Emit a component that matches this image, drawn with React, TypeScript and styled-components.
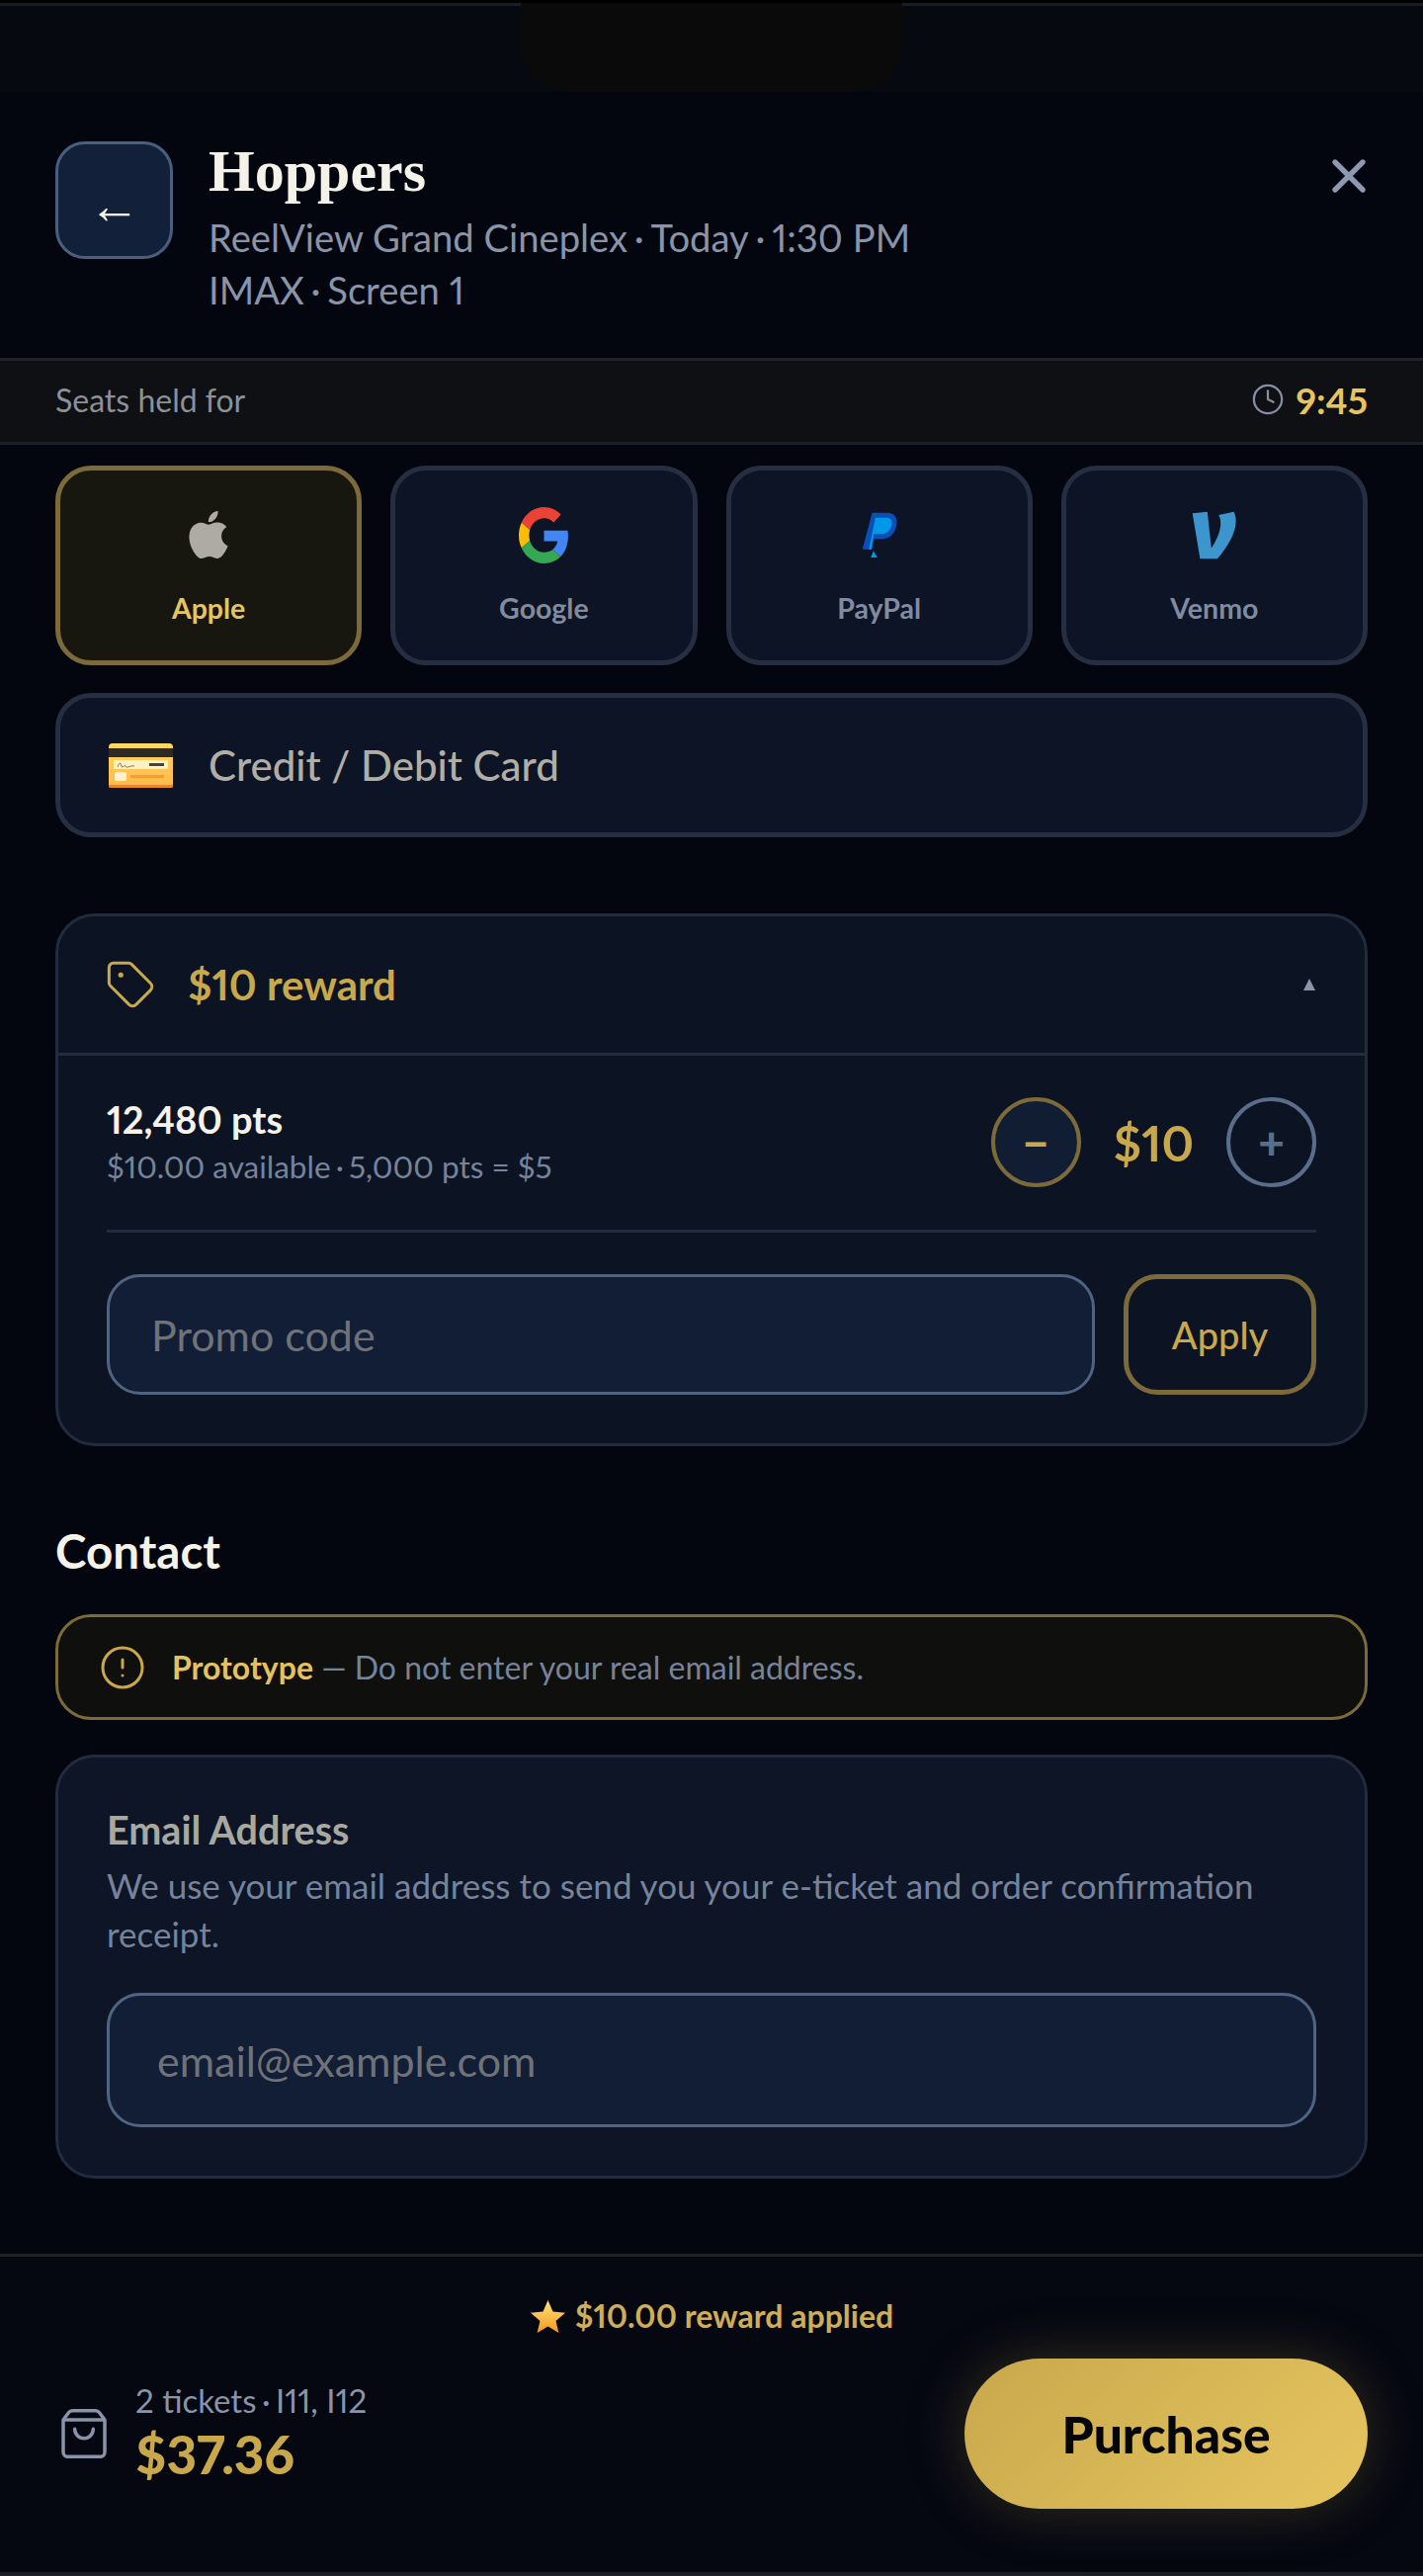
import React from 'react';
import styled, { createGlobalStyle } from 'styled-components';
import { X, Clock, Tag, CircleAlert, ShoppingBag } from 'lucide-react';
import { SiApple } from 'react-icons/si';

const GlobalStyle = createGlobalStyle`
  * { box-sizing: border-box; }
  html, body { margin: 0; padding: 0; background: #03060f; }
  body {
    font-family: "Lato", "Noto Sans", sans-serif;
    font-variant-numeric: proportional-nums;
    color: #f5f2ea;
  }
  button, input { font-family: inherit; font-variant-numeric: inherit; }
`;

const gold = '#c9a84c';
const goldLight = '#e6c560';
const goldBorder = '#7c6a3a';
const line = '#222c3e';
const muted = '#76839a';

const Page = styled.div`
  width: 1440px;
  height: 2606px;
  display: flex;
  flex-direction: column;
  background: #03060f;
`;

const StatusBar = styled.div`
  height: 93px;
  display: flex;
  justify-content: center;
  background: #060a10;
  border-top: 3px solid #000;
  position: relative;

  &::before {
    content: '';
    position: absolute;
    top: 0;
    left: 0;
    right: 0;
    height: 3px;
    background: #1a1d22;
  }
`;

const Notch = styled.div`
  width: 386px;
  height: 90px;
  background: #0a0a0a;
  border-radius: 0 0 52px 52px;
  position: relative;
`;

const Header = styled.header`
  height: 269px;
  padding: 50px 56px 0;
  display: flex;
  align-items: flex-start;
  gap: 36px;
`;

const BackButton = styled.button`
  width: 119px;
  height: 119px;
  flex: none;
  display: flex;
  align-items: center;
  justify-content: center;
  padding: 10px 0 0;
  background: #12203a;
  border: 3px solid #4a5f7e;
  border-radius: 30px;
  font-family: "Liberation Sans", sans-serif;
  font-size: 52px;
  line-height: 52px;
  color: #f5f2ea;
`;

const HeaderText = styled.div`
  flex: 1;
`;

const Title = styled.h1`
  margin: -2px 0 9px;
  font-family: "Liberation Serif", serif;
  font-size: 60px;
  line-height: 64px;
  font-weight: 700;
  color: #f5f2ea;
`;

const Meta = styled.div`
  font-size: 38.2px;
  line-height: 53px;
  color: #8a94a9;
`;

const Sep = styled.span`
  word-spacing: -3px;
`;

const CloseButton = styled.button`
  flex: none;
  width: 60px;
  height: 60px;
  margin: 5px -11px 0 0;
  padding: 0;
  display: flex;
  align-items: center;
  justify-content: center;
  background: none;
  border: none;
  color: #8e99b0;
`;

const TimerBar = styled.div`
  height: 88px;
  padding: 0 56px 4px;
  display: flex;
  align-items: center;
  justify-content: space-between;
  background: #0e1013;
  border-top: 3px solid #1f2227;
  border-bottom: 3px solid #1c2029;
`;

const TimerLabel = styled.span`
  font-size: 32px;
  color: #8c9097;
`;

const TimerValue = styled.div`
  display: flex;
  align-items: center;
  gap: 11px;
  font-size: 37px;
  font-weight: 700;
  color: ${goldLight};

  svg { color: #858fa3; }
`;

const Content = styled.main`
  flex: 1;
  padding: 21px 56px 0;
  display: flex;
  flex-direction: column;
`;

const PayGrid = styled.div`
  display: grid;
  grid-template-columns: repeat(4, 1fr);
  gap: 29px;
`;

const PayButton = styled.button<{ $active?: boolean }>`
  height: 202px;
  padding: 36px 0 0;
  display: flex;
  flex-direction: column;
  align-items: center;
  background: ${p => (p.$active ? '#17160f' : '#0c1425')};
  border: 5px solid ${p => (p.$active ? goldBorder : '#262f42')};
  border-radius: 36px;
`;

const PayIcon = styled.span`
  height: 58px;
  display: flex;
  align-items: center;
  justify-content: center;
  color: #adaba3;
`;

const PayLabel = styled.span<{ $active?: boolean }>`
  margin-top: 27px;
  font-size: 28.5px;
  line-height: 36px;
  font-weight: 700;
  color: ${p => (p.$active ? goldLight : '#818b9f')};
`;

const CardRow = styled.button`
  height: 146px;
  margin-top: 28px;
  padding: 0 0 0 49px;
  display: flex;
  align-items: center;
  gap: 36px;
  background: #0c1425;
  border: 5px solid #262f42;
  border-radius: 36px;
  font-size: 42px;
  font-weight: 500;
  color: #b0aea6;
`;

const Panel = styled.section`
  margin-top: 77px;
  background: #0c1424;
  border: 3px solid ${line};
  border-radius: 40px;
`;

const PanelHead = styled.div`
  height: 141px;
  padding: 0 50px 0 47px;
  display: flex;
  align-items: center;
  gap: 32px;
  border-bottom: 3px solid ${line};
  font-size: 42px;
  font-weight: 700;
  color: ${gold};
`;

const Caret = styled.span`
  margin-left: auto;
  width: 0;
  height: 0;
  border-left: 6px solid transparent;
  border-right: 6px solid transparent;
  border-bottom: 12px solid #8c95a8;
`;

const PanelBody = styled.div`
  padding: 42px 49px 49px;
`;

const PointsRow = styled.div`
  display: flex;
  align-items: center;
  justify-content: space-between;
  padding-bottom: 43px;
  border-bottom: 3px solid ${line};
`;

const Points = styled.div`
  margin-top: -2px;
  font-size: 38px;
  line-height: 46px;
  font-weight: 700;
  color: #f5f2ea;
`;

const PointsSub = styled.div`
  margin-top: 5px;
  font-size: 31.5px;
  line-height: 40px;
  color: ${muted};
`;

const Stepper = styled.div`
  display: flex;
  align-items: center;
  gap: 33px;
  font-size: 49px;
  font-weight: 700;
  color: ${gold};
`;

const StepButton = styled.button<{ $gold?: boolean }>`
  width: 91px;
  height: 91px;
  padding: 0;
  display: flex;
  align-items: center;
  justify-content: center;
  background: ${p => (p.$gold ? '#111d33' : 'transparent')};
  border: 4px solid ${p => (p.$gold ? goldBorder : '#5a6e8c')};
  border-radius: 50%;
  font-size: 46px;
  font-weight: 900;
  color: ${p => (p.$gold ? gold : '#5a6e8c')};
`;

const PromoRow = styled.div`
  margin-top: 42px;
  display: flex;
  gap: 29px;
`;

const TextField = styled.input<{ $height: number; $inset: number }>`
  flex: 1;
  min-width: 0;
  height: ${p => p.$height}px;
  padding: 0 ${p => p.$inset}px;
  background: #121e35;
  border: 3px solid #506482;
  border-radius: 34px;
  font-size: 43px;
  color: #f5f2ea;
  outline: none;

  &::placeholder {
    color: #6f7278;
    opacity: 1;
  }
`;

const ApplyButton = styled.button`
  width: 195px;
  flex: none;
  background: transparent;
  border: 5px solid ${goldBorder};
  border-radius: 34px;
  font-size: 38px;
  font-weight: 500;
  color: ${gold};
`;

const Heading = styled.h2`
  margin: 77px 0 0;
  font-size: 47.5px;
  line-height: 58px;
  font-weight: 700;
  color: #f5f2ea;
`;

const Notice = styled.div`
  height: 107px;
  margin-top: 35px;
  padding: 0 41px;
  display: flex;
  align-items: center;
  gap: 26px;
  background: #0f0f0d;
  border: 3px solid ${goldBorder};
  border-radius: 36px;
  font-size: 32px;
  color: ${muted};

  svg { color: ${gold}; flex: none; }
  strong { font-weight: 700; color: #e3c25f; }
`;

const EmailCard = styled.section`
  margin-top: 35px;
  padding: 51px 49px 49px;
  background: #0d1526;
  border: 3px solid ${line};
  border-radius: 40px;
`;

const FieldLabel = styled.div`
  font-size: 39.5px;
  line-height: 44px;
  font-weight: 700;
  color: #a8a8a0;
`;

const FieldHint = styled.p`
  margin: 10px 0 35px;
  font-size: 35px;
  line-height: 49px;
  color: ${muted};
`;

const EmailField = styled.div`
  display: flex;
`;

const Footer = styled.footer`
  height: 326px;
  display: flex;
  flex-direction: column;
  background: #050711;
  border-top: 3px solid #1f2329;
  border-bottom: 4px solid #1b1e24;
  padding: 41px 56px 0 57px;
`;

const RewardLine = styled.div`
  display: flex;
  align-items: center;
  justify-content: center;
  gap: 10px;
  font-size: 32px;
  line-height: 38px;
  font-weight: 700;
  color: #cfae58;
`;

const CheckoutRow = styled.div`
  margin-top: 24px;
  display: flex;
  align-items: center;
  justify-content: space-between;
`;

const Summary = styled.div`
  display: flex;
  align-items: center;
  gap: 24px;

  svg { color: #8a93a8; }
`;

const SummaryLine = styled.div`
  margin-top: -3px;
  font-size: 33px;
  line-height: 42px;
  color: #8a93a8;
`;

const Total = styled.div`
  margin-top: 3px;
  font-size: 53px;
  line-height: 62px;
  font-weight: 900;
  color: ${gold};
`;

const PurchaseButton = styled.button`
  width: 408px;
  height: 152px;
  background: linear-gradient(135deg, #c9a84c, #e6c560);
  border: none;
  border-radius: 76px;
  box-shadow: 0 0 60px rgba(201, 168, 76, 0.25);
  font-size: 51.5px;
  font-weight: 900;
  color: #05060a;
`;

const GoogleMark = () => (
  <svg width="51" height="57" viewBox="0 0 48 48" preserveAspectRatio="none">
    <path fill="#EA4335" d="M24 9.5c3.54 0 6.71 1.22 9.21 3.6l6.85-6.85C35.9 2.38 30.47 0 24 0 14.62 0 6.51 5.38 2.56 13.22l7.98 6.19C12.43 13.72 17.74 9.5 24 9.5z" />
    <path fill="#4285F4" d="M46.98 24.55c0-1.57-.15-3.09-.38-4.55H24v9.02h12.94c-.58 2.96-2.26 5.48-4.78 7.18l7.73 6c4.51-4.18 7.09-10.36 7.09-17.65z" />
    <path fill="#FBBC05" d="M10.53 28.59c-.48-1.45-.76-2.99-.76-4.59s.27-3.14.76-4.59l-7.98-6.19C.92 16.46 0 20.12 0 24c0 3.88.92 7.54 2.56 10.78l7.97-6.19z" />
    <path fill="#34A853" d="M24 48c6.48 0 11.93-2.13 15.89-5.81l-7.73-6c-2.15 1.45-4.92 2.3-8.16 2.3-6.26 0-11.57-4.22-13.47-9.91l-7.98 6.19C6.51 42.62 14.62 48 24 48z" />
  </svg>
);

const PayPalMark = () => (
  <svg width="38" height="48" viewBox="95 80 115 145">
    <path fill="#0a4fb5" d="M130 85h45c22 0 34 14 30 36-4 26-20 44-42 44h-28l-5 32h-30z" />
    <path fill="#0098e8" d="M140 100h35c12 0 17 9 15 21-3 17-14 29-28 29h-27l-8 48h-5l-2-2z" />
    <path fill="#0098e8" d="M134 202l12 20h-20z" />
  </svg>
);

const VenmoMark = () => (
  <svg width="47" height="51" viewBox="80 85 140 152">
    <path fill="#3d95ce" d="M85 95l45-5 12 110c12-18 28-48 28-74 0-12-2-20-6-26l46-10c4 8 6 18 6 30 0 34-26 78-56 112h-52z" />
  </svg>
);

const CardMark = () => (
  <svg width="65" height="45" viewBox="0 0 65 45">
    <defs>
      <linearGradient id="cardFill" x1="0" y1="0" x2="0" y2="1">
        <stop offset="0" stopColor="#ffd766" />
        <stop offset="1" stopColor="#ffb84a" />
      </linearGradient>
    </defs>
    <rect width="65" height="45" rx="4" fill="url(#cardFill)" />
    <rect y="42" width="65" height="3" rx="1.5" fill="#e8862c" />
    <rect y="5" width="65" height="9" fill="#2b2a24" />
    <rect x="5" y="17" width="55" height="9" rx="1" fill="#fff1c4" />
    <path d="M9 24c2-5 3-5 4-1s3-3 4 0 5-1 9 0" fill="none" stroke="#5b5443" strokeWidth="0.8" />
    <rect x="41" y="20" width="15" height="3" fill="#4b4432" />
    <rect x="6" y="29" width="12" height="9" rx="2" fill="#fff0cf" />
    <rect x="22" y="32" width="34" height="3" fill="#f0a032" />
  </svg>
);

const StarMark = () => (
  <svg width="35" height="33" viewBox="0 0 35 33">
    <defs>
      <linearGradient id="starFill" x1="0" y1="0" x2="0" y2="1">
        <stop offset="0" stopColor="#ffe27a" />
        <stop offset="1" stopColor="#f59a1e" />
      </linearGradient>
    </defs>
    <path fill="url(#starFill)" d="M17.5 0l5 11.6 12.5 1.2-9.5 8.2 2.9 12-10.9-6.4L6.6 33l2.9-12L0 12.8l12.5-1.2z" />
  </svg>
);

export default function App() {
  return (
    <>
      <GlobalStyle />
      <Page>
        <StatusBar>
          <Notch />
        </StatusBar>

        <Header>
          <BackButton aria-label="Back">←</BackButton>
          <HeaderText>
            <Title>Hoppers</Title>
            <Meta>ReelView Grand Cineplex<Sep> · </Sep>Today<Sep> · </Sep>1:30 PM</Meta>
            <Meta>IMAX<Sep> · </Sep>Screen 1</Meta>
          </HeaderText>
          <CloseButton aria-label="Close">
            <X size={56} strokeWidth={2.3} />
          </CloseButton>
        </Header>

        <TimerBar>
          <TimerLabel>Seats held for</TimerLabel>
          <TimerValue>
            <Clock size={34} strokeWidth={1.6} />
            9:45
          </TimerValue>
        </TimerBar>

        <Content>
          <PayGrid>
            <PayButton $active>
              <PayIcon><SiApple size={48} /></PayIcon>
              <PayLabel $active>Apple</PayLabel>
            </PayButton>
            <PayButton>
              <PayIcon><GoogleMark /></PayIcon>
              <PayLabel>Google</PayLabel>
            </PayButton>
            <PayButton>
              <PayIcon><PayPalMark /></PayIcon>
              <PayLabel>PayPal</PayLabel>
            </PayButton>
            <PayButton>
              <PayIcon><VenmoMark /></PayIcon>
              <PayLabel>Venmo</PayLabel>
            </PayButton>
          </PayGrid>

          <CardRow>
            <CardMark />
            Credit / Debit Card
          </CardRow>

          <Panel>
            <PanelHead>
              <Tag size={52} strokeWidth={1.4} />
              $10 reward
              <Caret />
            </PanelHead>
            <PanelBody>
              <PointsRow>
                <div>
                  <Points>12,480 pts</Points>
                  <PointsSub>$10.00 available<Sep> · </Sep>5,000 pts = $5</PointsSub>
                </div>
                <Stepper>
                  <StepButton $gold>−</StepButton>
                  $10
                  <StepButton>+</StepButton>
                </Stepper>
              </PointsRow>
              <PromoRow>
                <TextField $height={122} $inset={42} placeholder="Promo code" />
                <ApplyButton>Apply</ApplyButton>
              </PromoRow>
            </PanelBody>
          </Panel>

          <Heading>Contact</Heading>

          <Notice>
            <CircleAlert size={48} strokeWidth={1.5} />
            <span><strong>Prototype</strong> — Do not enter your real email address.</span>
          </Notice>

          <EmailCard>
            <FieldLabel>Email Address</FieldLabel>
            <FieldHint>We use your email address to send you your e-ticket and order confirmation receipt.</FieldHint>
            <EmailField>
              <TextField $height={136} $inset={48} placeholder="email@example.com" />
            </EmailField>
          </EmailCard>
        </Content>

        <Footer>
          <RewardLine>
            <StarMark />
            $10.00 reward applied
          </RewardLine>
          <CheckoutRow>
            <Summary>
              <ShoppingBag size={56} strokeWidth={1.5} />
              <div>
                <SummaryLine>2 tickets<Sep> · </Sep>I11, I12</SummaryLine>
                <Total>$37.36</Total>
              </div>
            </Summary>
            <PurchaseButton>Purchase</PurchaseButton>
          </CheckoutRow>
        </Footer>
      </Page>
    </>
  );
}
